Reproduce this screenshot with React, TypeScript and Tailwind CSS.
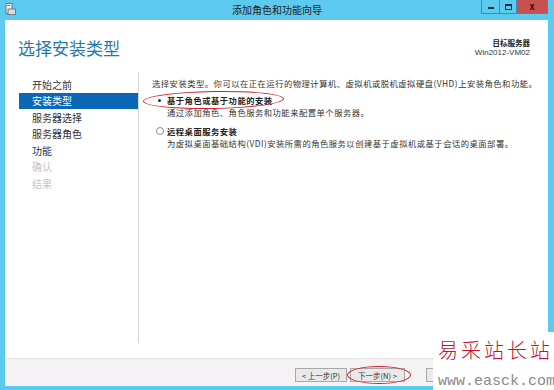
import React from "react";

const cjk = {
  fontFamily: '"Noto Sans CJK SC", "Noto Sans", sans-serif',
};

const navItems = [
  { label: "开始之前", state: "done" },
  { label: "安装类型", state: "active" },
  { label: "服务器选择", state: "done" },
  { label: "服务器角色", state: "done" },
  { label: "功能", state: "done" },
  { label: "确认", state: "off" },
  { label: "结果", state: "off" },
];

function WindowIcon() {
  return (
    <svg width="11" height="12" viewBox="0 0 11 12">
      <rect x="1" y="0.5" width="6" height="10" fill="#f4f4f4" stroke="#6b7b88" />
      <rect x="3" y="6" width="7.5" height="5.5" fill="#d9dde2" stroke="#6b7b88" />
      <rect x="2" y="2" width="3" height="1" fill="#6b7b88" />
    </svg>
  );
}

export default function App() {
  return (
    <div
      className="relative w-[554px] h-[390px] overflow-hidden bg-[#5cc9ee] flex flex-col"
      style={cjk}
    >
      {/* title bar */}
      <div className="h-[20px] flex items-start">
        <div className="w-[60px] pl-[5px] pt-[3px]">
          <WindowIcon />
        </div>
        <div className="flex-1 pl-[172px] pt-[3px] text-[10px] leading-[14px] text-[#222]">
          添加角色和功能向导
        </div>
        <div className="flex h-[14px] mr-[6px] border border-t-0 border-[#3d8fb0]">
          <div className="w-[18px] flex items-end justify-center pb-[4px] border-r border-[#3d8fb0]">
            <div className="w-[6px] h-[2px] bg-[#1c2b36]" />
          </div>
          <div className="w-[17px] flex items-center justify-center border-r border-[#3d8fb0]">
            <div className="w-[7px] h-[6px] border-[1.5px] border-[#1c2b36] border-t-2" />
          </div>
          <div className="w-[30px] bg-[#c75050] flex items-center justify-center text-[9px] font-bold text-[#2a1010] leading-none">
            x
          </div>
        </div>
      </div>

      {/* client area */}
      <div className="flex-1 ml-[5px] mr-[6px] mb-[4px] bg-white flex flex-col">
        <div className="h-[52px] flex justify-between items-start">
          <div className="pl-[13px] pt-[17px] text-[17px] leading-[22px] text-[#1f7aa8]">
            选择安装类型
          </div>
          <div className="pr-[18px] pt-[17px] text-right">
            <div className="text-[7.5px] leading-[11px] font-bold text-[#222]">目标服务器</div>
            <div
              className="text-[8px] leading-[10px] text-[#333]"
              style={{ fontFamily: '"Liberation Sans", sans-serif' }}
            >
              Win2012-VM02
            </div>
          </div>
        </div>

        <div className="flex h-[271px]">
          <nav className="w-[134px] pl-[14px] pt-[4px] border-r border-[#d6d6d6]">
            {navItems.map((item) => (
              <div
                key={item.label}
                className={
                  item.state === "active"
                    ? "h-[16.5px] pl-[13px] flex items-center text-[10px] bg-[#0b68b6] text-white"
                    : item.state === "off"
                    ? "h-[16.5px] pl-[13px] flex items-center text-[10px] text-[#c4c4c4]"
                    : "h-[16.5px] pl-[13px] flex items-center text-[10px] text-[#333]"
                }
              >
                {item.label}
              </div>
            ))}
          </nav>

          <div className="flex-1 pl-[13px] pt-[5px] text-[8.3px] leading-[12px] tracking-[0.5px] text-[#333]">
            <div>
              选择安装类型。你可以在正在运行的物理计算机、虚拟机或脱机虚拟硬盘(VHD)上安装角色和功能。
            </div>

            <div className="relative mt-[5px]">
              <div className="flex items-center h-[12px]">
                <div className="w-[15px] flex justify-center">
                  <div className="w-[3px] h-[3px] rounded-full bg-[#222]" />
                </div>
                <span className="font-bold text-[#222]">基于角色或基于功能的安装</span>
              </div>
              <div className="pl-[15px]">通过添加角色、角色服务和功能来配置单个服务器。</div>
              <div className="absolute left-[-9px] top-[-3px] w-[141px] h-[18px] rounded-[50%] border-[1.5px] border-[#d0202a] -rotate-1" />
            </div>

            <div className="mt-[7px]">
              <div className="flex items-center h-[12px]">
                <div className="w-[15px] flex justify-center">
                  <div className="w-[8px] h-[8px] rounded-full border border-[#8a8a8a] bg-white" />
                </div>
                <span className="font-bold text-[#222]">远程桌面服务安装</span>
              </div>
              <div className="pl-[15px]">
                为虚拟桌面基础结构(VDI)安装所需的角色服务以创建基于虚拟机或基于会话的桌面部署。
              </div>
            </div>
          </div>
        </div>

        <div className="mt-[15px] flex-1 border-t border-[#e2e2e2] bg-[#f4f2f4] flex items-start pl-[290px] pt-[9px] gap-[3px]">
          <div className="relative h-[14px] w-[52px] border border-[#a8a8a8] bg-[#e9e9e9] flex items-center justify-center text-[7.5px] leading-[11px] text-[#333]">
            &lt; 上一步(P)
          </div>
          <div className="relative h-[14px] w-[55px] border border-[#a8a8a8] bg-[#e9e9e9] flex items-center justify-center text-[7.5px] leading-[11px] text-[#333]">
            下一步(N) &gt;
            <div className="absolute left-[-4px] top-[-3px] w-[64px] h-[18px] rounded-[50%] border-[1.5px] border-[#d0202a]" />
          </div>
          <div className="ml-[18px] h-[14px] w-[55px] border border-[#a8a8a8] bg-[#e9e9e9]" />
        </div>
      </div>

      {/* watermark */}
      <div className="absolute right-0 bottom-0 w-[121px] h-[58px] bg-white flex flex-col items-start pl-[5px]">
        <div className="mt-[3px] text-[20px] leading-[29px] tracking-[3px] font-light text-[#c8102e]">
          易采站长站
        </div>
        <div
          className="mt-[10px] text-[15px] leading-[16px] text-[#8a8a8a]"
          style={{ fontFamily: '"Liberation Mono", monospace' }}
        >
          www.easck.com
        </div>
      </div>
    </div>
  );
}
